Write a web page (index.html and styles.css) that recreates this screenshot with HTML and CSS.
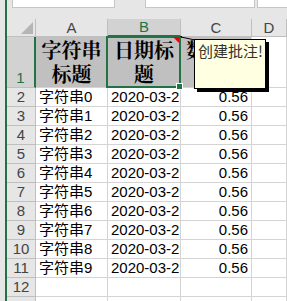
FILE: index.html
```html
<!DOCTYPE html>
<html lang="zh">
<head>
    <meta charset="UTF-8">
    <meta name="viewport" content="width=device-width, initial-scale=1.0">
    <title>批注</title>
    <link rel="stylesheet" href="styles.css">
</head>
<body>
    <div class="window">
        <div class="toolbar">
            <div class="box name-box"></div>
            <div class="box formula-box"></div>
            <div class="box extra-box"></div>
        </div>

        <div class="sheet">
            <div class="corner"><span class="corner-mark"></span></div>
            <div class="col-head">A</div>
            <div class="col-head active">B</div>
            <div class="col-head">C</div>
            <div class="col-head">D</div>

            <div class="row-head active">1</div>
            <div class="cell title">字符串标题</div>
            <div class="cell title selected">
                日期标题
                <span class="comment-mark"></span>
                <span class="selection"><span class="fill-handle"></span></span>
            </div>
            <div class="cell title">数值标题</div>
            <div class="cell"></div>

            <div class="row-head">2</div><div class="cell">字符串0</div><div class="cell">2020-03-23</div><div class="cell num">0.56</div><div class="cell"></div>
            <div class="row-head">3</div><div class="cell">字符串1</div><div class="cell">2020-03-23</div><div class="cell num">0.56</div><div class="cell"></div>
            <div class="row-head">4</div><div class="cell">字符串2</div><div class="cell">2020-03-23</div><div class="cell num">0.56</div><div class="cell"></div>
            <div class="row-head">5</div><div class="cell">字符串3</div><div class="cell">2020-03-23</div><div class="cell num">0.56</div><div class="cell"></div>
            <div class="row-head">6</div><div class="cell">字符串4</div><div class="cell">2020-03-23</div><div class="cell num">0.56</div><div class="cell"></div>
            <div class="row-head">7</div><div class="cell">字符串5</div><div class="cell">2020-03-23</div><div class="cell num">0.56</div><div class="cell"></div>
            <div class="row-head">8</div><div class="cell">字符串6</div><div class="cell">2020-03-23</div><div class="cell num">0.56</div><div class="cell"></div>
            <div class="row-head">9</div><div class="cell">字符串7</div><div class="cell">2020-03-23</div><div class="cell num">0.56</div><div class="cell"></div>
            <div class="row-head">10</div><div class="cell">字符串8</div><div class="cell">2020-03-23</div><div class="cell num">0.56</div><div class="cell"></div>
            <div class="row-head">11</div><div class="cell">字符串9</div><div class="cell">2020-03-23</div><div class="cell num">0.56</div><div class="cell"></div>
            <div class="row-head">12</div><div class="cell"></div><div class="cell"></div><div class="cell"></div><div class="cell"></div>
            <div class="row-head"></div><div class="cell"></div><div class="cell"></div><div class="cell"></div><div class="cell"></div>

            <!-- comment popup for B1 -->
            <svg class="comment-arrow" width="18" height="8" viewBox="0 0 18 8">
                <path d="M1 1 L3 1 L3 3 Z" fill="#000"/>
                <line x1="2" y1="2" x2="16" y2="5" stroke="#000" stroke-width="1"/>
            </svg>
            <div class="comment">创建批注!</div>
        </div>
    </div>
</body>
</html>
```

FILE: styles.css
```css
html, body {
    margin: 0;
    padding: 0;
    width: 100%;
    height: 100%;
    overflow: hidden;
    background: #e6e6e6;
    font-family: 'Liberation Sans', 'Noto Sans CJK SC', sans-serif;
    font-size: 15px;
    color: #000;
}

.window {
    margin-left: 5px;
    height: 100%;
    border-left: 2px solid #217346;
    background: #e6e6e6;
}

/* Formula bar strip */
.toolbar {
    height: 19px;
    display: flex;
    align-items: flex-start;
}
.box {
    height: 8px;
    background: #fff;
    border: 1px solid #c6c6c6;
    border-top: none;
    box-sizing: border-box;
}
.name-box {
    margin-left: 5px;
    width: 103px;
}
.formula-box {
    margin-left: 30px;
    width: 110px;
}
.extra-box {
    margin-left: 2px;
    flex: 1;
    border-right: none;
}

/* Grid */
.sheet {
    position: relative;
    display: grid;
    grid-template-columns: 29px 72px 73px 71px 1fr;
    grid-template-rows: 18px 51px repeat(12, 19px);
    background: #fff;
}

.corner,
.col-head,
.row-head {
    background: #e6e6e6;
    color: #444;
    box-sizing: border-box;
    border-right: 1px solid #bfbfbf;
    border-bottom: 1px solid #bfbfbf;
}
.corner {
    position: relative;
}
.corner-mark {
    position: absolute;
    right: 2px;
    bottom: 2px;
    width: 0;
    height: 0;
    border-left: 12px solid transparent;
    border-bottom: 12px solid #b5b5b5;
}

.col-head {
    display: flex;
    align-items: flex-end;
    justify-content: center;
    line-height: 17px;
}
.col-head.active {
    background: #d2d2d2;
    color: #217346;
    border-bottom: 2px solid #217346;
}

.row-head {
    display: flex;
    align-items: flex-end;
    justify-content: center;
    line-height: 18px;
}
.row-head.active {
    background: #d2d2d2;
    color: #217346;
    border-right: 2px solid #217346;
}

.cell {
    box-sizing: border-box;
    border-right: 1px solid #d4d4d4;
    border-bottom: 1px solid #d4d4d4;
    padding: 0 3px;
    line-height: 18px;
    white-space: nowrap;
    overflow: hidden;
}
.cell.num {
    text-align: right;
}

.cell.title {
    background: #c0c0c0;
    font-family: 'Noto Serif CJK SC', 'Noto Sans CJK SC', serif;
    font-weight: bold;
    font-size: 20px;
    line-height: 24px;
    white-space: normal;
    text-align: center;
    display: flex;
    align-items: center;
    justify-content: center;
    padding: 0 2px;
    overflow: visible;
    position: relative;
}

/* B1 selection */
.selection {
    position: absolute;
    top: -1px;
    left: -2px;
    right: -1px;
    bottom: -1px;
    border: 2px solid #217346;
    z-index: 2;
}
.fill-handle {
    position: absolute;
    right: -4px;
    bottom: -4px;
    width: 5px;
    height: 5px;
    background: #217346;
    border: 1px solid #fff;
}
.comment-mark {
    position: absolute;
    top: 0;
    right: 1px;
    width: 0;
    height: 0;
    border-left: 6px solid transparent;
    border-top: 6px solid #e00;
    z-index: 3;
}

/* Comment popup */
.comment {
    position: absolute;
    left: 187px;
    top: 20px;
    width: 72px;
    height: 50px;
    box-sizing: border-box;
    background: #ffffe1;
    border: 1px solid #000;
    box-shadow: 3px 3px 0 #000;
    padding: 1px 3px;
    font-family: 'Noto Sans CJK SC', sans-serif;
    font-size: 15px;
    line-height: 20px;
    color: #333;
    white-space: nowrap;
    z-index: 4;
}
.comment-arrow {
    position: absolute;
    left: 172px;
    top: 16px;
    z-index: 4;
}
```
